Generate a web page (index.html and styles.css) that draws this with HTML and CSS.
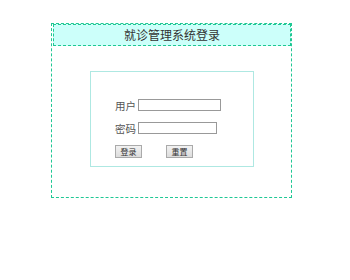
FILE: index.html
```html
<!DOCTYPE html>
<html lang="zh-CN">
<head>
    <meta charset="UTF-8">
    <meta name="viewport" content="width=device-width, initial-scale=1.0">
    <title>就诊管理系统登录</title>
    <link rel="stylesheet" href="styles.css">
</head>
<body>
    <div class="moldura">
        <div class="cabecalho">就诊管理系统登录</div>
        <div class="painel">
            <div class="linha">
                <label for="usuario">用户</label>
                <input type="text" id="usuario" class="campo campoLongo">
            </div>
            <div class="linha">
                <label for="senha">密码</label>
                <input type="password" id="senha" class="campo campoCurto">
            </div>
            <div class="botoes">
                <button class="botao">登录</button>
                <button class="botao">重置</button>
            </div>
        </div>
    </div>
</body>
</html>
```

FILE: styles.css
```css
body {
    margin: 0;
    background-color: white;
    font-family: "Noto Sans CJK SC", sans-serif;
    color: #444;
}

.moldura {
    box-sizing: border-box;
    width: 241px;
    height: 175px;
    margin: 23px 0 0 51px;
    border: 1px dashed #1fc894;
}

.cabecalho {
    box-sizing: border-box;
    height: 22px;
    margin: 0 0 0 1px;
    border: 1px dashed #1fc894;
    background-color: #ccfffa;
    text-align: center;
    font-size: 12px;
    line-height: 20px;
    color: #333;
}

.painel {
    box-sizing: border-box;
    width: 164px;
    height: 96px;
    margin: 25px 0 0 38px;
    border: 1px solid #aee8e2;
    padding: 27px 0 0 24px;
}

.linha {
    display: flex;
    align-items: center;
    gap: 2px;
    height: 12px;
    margin-bottom: 11px;
    font-size: 10.5px;
    color: #555;
}

.linha label {
    white-space: nowrap;
}

.campo {
    box-sizing: border-box;
    height: 12px;
    margin: 0;
    padding: 0;
    border: 1px solid #999;
    background: white;
}

.campoLongo {
    width: 83px;
}

.campoCurto {
    width: 79px;
}

.botoes {
    display: flex;
    gap: 24px;
}

.botao {
    box-sizing: border-box;
    width: 27px;
    height: 13px;
    margin: 0;
    padding: 0;
    border: 1px solid #aaa;
    background: linear-gradient(#f2f2f2, #dcdcdc);
    font-family: "Noto Sans CJK SC", sans-serif;
    font-size: 8px;
    line-height: 11px;
    color: #333;
}
```
